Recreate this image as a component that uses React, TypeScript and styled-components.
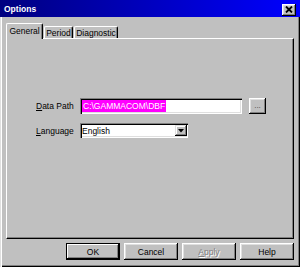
import React from "react";
import styled, { createGlobalStyle } from "styled-components";

const GlobalStyle = createGlobalStyle`
  html, body {
    margin: 0;
    padding: 0;
    background: #c0c0c0;
  }
  body {
    font-family: "Liberation Sans", Arial, sans-serif;
    font-size: 8.5px;
    color: #000;
  }
`;

const Window = styled.div`
  width: 300px;
  height: 267px;
  display: flex;
  flex-direction: column;
  background: #c0c0c0;
  overflow: hidden;
`;

const TitleBar = styled.div`
  height: 17px;
  flex-shrink: 0;
  display: flex;
  align-items: center;
  justify-content: space-between;
  padding: 0 4px 0 4px;
  background: linear-gradient(to right, #000080, #0000ff);
  color: #fff;
  font-weight: bold;
  font-size: 8.5px;
`;

const CloseButton = styled.div`
  width: 14px;
  height: 12px;
  margin-top: 2px;
  box-sizing: border-box;
  background: #c0c0c0;
  display: flex;
  align-items: center;
  justify-content: center;
  box-shadow: inset -1px -1px #000, inset 1px 1px #fff, inset -2px -2px #808080,
    inset 2px 2px #dfdfdf;
`;

const Body = styled.div`
  flex: 1;
  display: flex;
  flex-direction: column;
  padding: 6px 6px 7px 6px;
  box-shadow: inset 1px 0 #dfdfdf, inset 2px 0 #fff, inset -1px -1px #000,
    inset -2px -2px #808080;
`;

const TabRow = styled.div`
  height: 15px;
  display: flex;
  align-items: flex-end;
  position: relative;
  z-index: 1;
`;

const Tab = styled.div<{ $active?: boolean; $w: number }>`
  width: ${(p) => p.$w}px;
  height: ${(p) => (p.$active ? 16 : 12)}px;
  margin-bottom: ${(p) => (p.$active ? -1 : 0)}px;
  box-sizing: border-box;
  background: #c0c0c0;
  border-top: 1px solid #fff;
  border-left: 1px solid #fff;
  border-right: 1px solid #000;
  border-radius: 2px 2px 0 0;
  box-shadow: inset -1px 0 #808080;
  display: flex;
  align-items: ${(p) => (p.$active ? "flex-start" : "center")};
  justify-content: center;
  padding-top: ${(p) => (p.$active ? 2 : 0)}px;
  margin-right: 1px;
  white-space: nowrap;
`;

const Panel = styled.div`
  height: 201px;
  box-sizing: border-box;
  border-top: 1px solid #fff;
  border-left: 1px solid #fff;
  border-right: 1px solid #000;
  border-bottom: 1px solid #000;
  box-shadow: inset -1px -1px #808080;
  padding: 59px 0 0 29px;
`;

const Form = styled.div`
  display: grid;
  grid-template-columns: 44px auto;
  row-gap: 9px;
  align-items: center;
`;

const Label = styled.div`
  white-space: nowrap;
  u {
    text-decoration: underline;
  }
`;

const FieldRow = styled.div`
  display: flex;
  align-items: center;
  gap: 7px;
`;

const TextBox = styled.div<{ $w: number; $h: number }>`
  width: ${(p) => p.$w}px;
  height: ${(p) => p.$h}px;
  box-sizing: border-box;
  background: #fff;
  box-shadow: inset 1px 1px #808080, inset 2px 2px #000, inset -1px -1px #fff,
    inset -2px -2px #dfdfdf;
  display: flex;
  align-items: center;
  padding: 0 1px 0 2px;
  position: relative;
`;

const Selected = styled.span`
  background: #ff00ff;
  color: #fff;
  line-height: 12px;
  padding: 0 1px;
`;

const SmallButton = styled.div`
  width: 17px;
  height: 16px;
  box-sizing: border-box;
  background: #c0c0c0;
  box-shadow: inset -1px -1px #000, inset 1px 1px #fff, inset -2px -2px #808080,
    inset 2px 2px #dfdfdf;
  display: flex;
  align-items: center;
  justify-content: center;
  color: #404040;
  font-size: 8px;
  padding-bottom: 2px;
`;

const DropButton = styled.div`
  margin-left: auto;
  width: 12px;
  height: 11px;
  box-sizing: border-box;
  background: #c0c0c0;
  box-shadow: inset -1px -1px #000, inset 1px 1px #dfdfdf, inset -2px -2px #808080,
    inset 2px 2px #fff;
  display: flex;
  align-items: center;
  justify-content: center;
`;

const ButtonBar = styled.div`
  display: flex;
  justify-content: flex-end;
  gap: 4px;
  margin-top: 4px;
`;

const Button = styled.div<{ $default?: boolean; $disabled?: boolean }>`
  width: 54px;
  height: 17px;
  box-sizing: border-box;
  background: #c0c0c0;
  display: flex;
  align-items: center;
  justify-content: center;
  color: ${(p) => (p.$disabled ? "#808080" : "#000")};
  text-shadow: ${(p) => (p.$disabled ? "1px 1px #fff" : "none")};
  box-shadow: ${(p) =>
    p.$default
      ? "inset 0 0 0 1px #000, inset -2px -2px #000, inset 2px 2px #fff, inset -3px -3px #808080"
      : "inset -1px -1px #000, inset 1px 1px #fff, inset -2px -2px #808080, inset 2px 2px #dfdfdf"};
`;

export default function App() {
  return (
    <>
      <GlobalStyle />
      <Window>
        <TitleBar>
          <span>Options</span>
          <CloseButton>
            <svg width="8" height="7" viewBox="0 0 8 7">
              <path d="M1 0.5 L7 6.5 M7 0.5 L1 6.5" stroke="#000" strokeWidth="1.8" />
            </svg>
          </CloseButton>
        </TitleBar>
        <Body>
          <TabRow>
            <Tab $active $w={37}>General</Tab>
            <Tab $w={29}>Period</Tab>
            <Tab $w={44}>Diagnostic</Tab>
          </TabRow>
          <Panel>
            <Form>
              <Label>
                <u>D</u>ata Path
              </Label>
              <FieldRow>
                <TextBox $w={162} $h={16}>
                  <Selected>C:\GAMMACOM\DBF</Selected>
                </TextBox>
                <SmallButton>...</SmallButton>
              </FieldRow>
              <Label>
                <u>L</u>anguage
              </Label>
              <TextBox $w={108} $h={15}>
                <span>English</span>
                <DropButton>
                  <svg width="6" height="4" viewBox="0 0 6 4">
                    <path d="M0 0 H6 L3 3.5 Z" fill="#000" />
                  </svg>
                </DropButton>
              </TextBox>
            </Form>
          </Panel>
          <ButtonBar>
            <Button $default>OK</Button>
            <Button>Cancel</Button>
            <Button $disabled>
              <span>
                <u>A</u>pply
              </span>
            </Button>
            <Button>Help</Button>
          </ButtonBar>
        </Body>
      </Window>
    </>
  );
}
